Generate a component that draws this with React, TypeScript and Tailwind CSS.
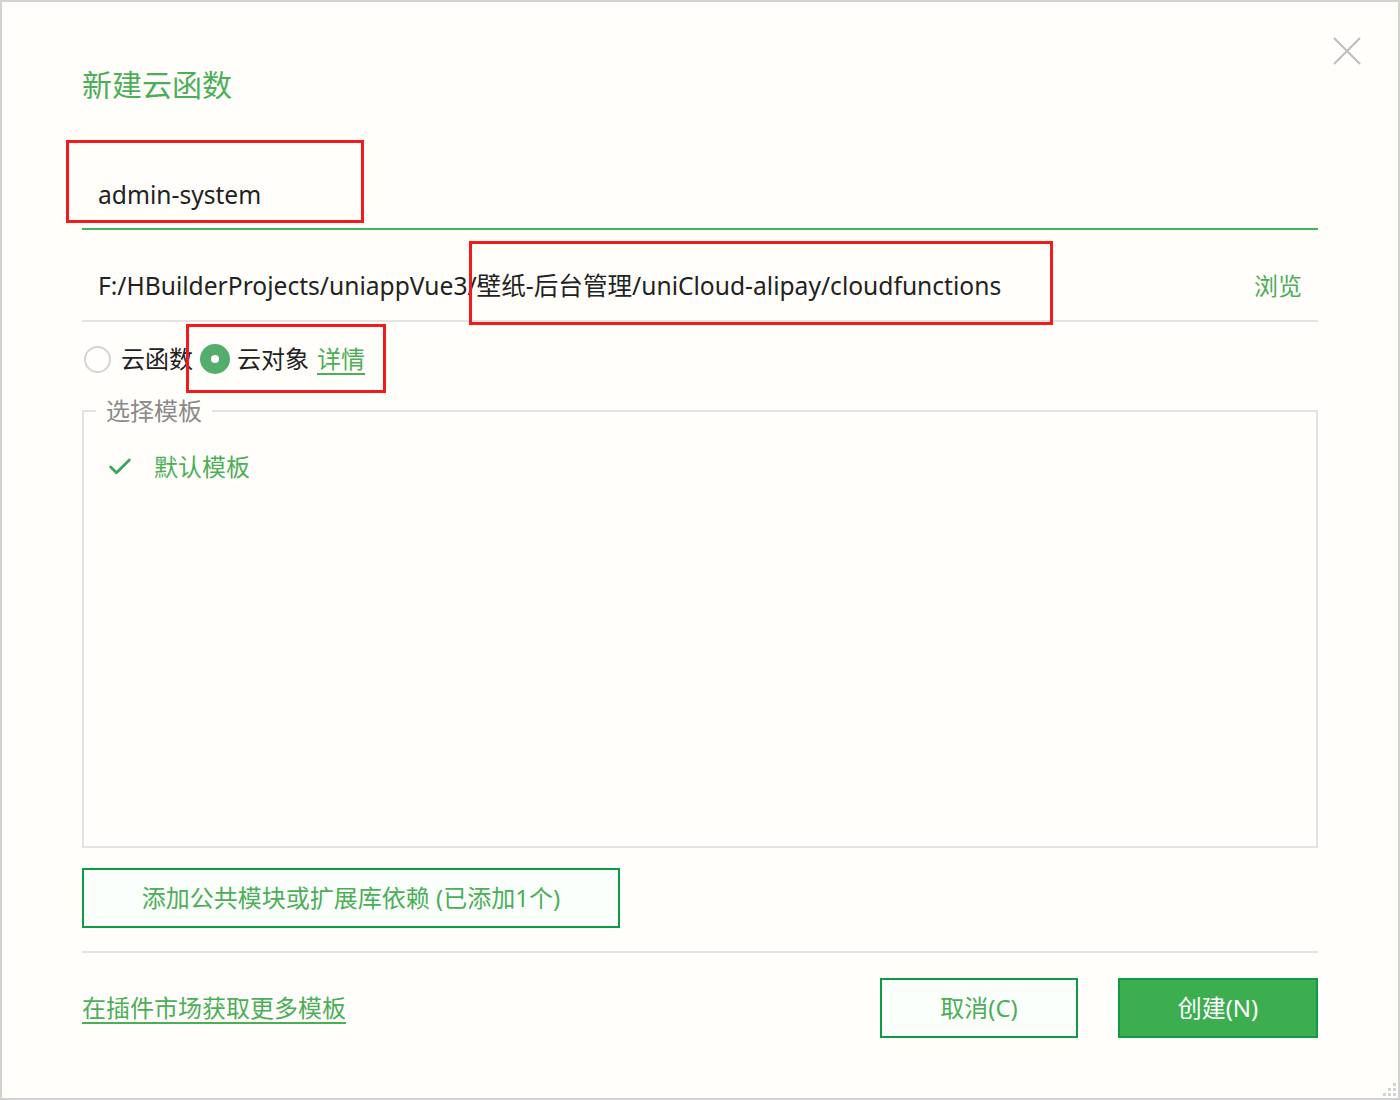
import { Check } from 'lucide-react'

const font = { fontFamily: '"Noto Sans", "Noto Sans CJK SC", sans-serif' }

// ─── Red annotation box (drawn over content) ──────────────────────────────────

function Mark({ className }: { className: string }) {
  return <div className={`pointer-events-none absolute border-[3px] border-[#f21b1b] ${className}`} />
}

// ─── Dialog ───────────────────────────────────────────────────────────────────

export default function App() {
  return (
    <div
      className="relative h-[1100px] w-[1400px] overflow-hidden border-2 border-[#d2d2d2] bg-[#fffefb] text-[#222]"
      style={font}
    >
      <button className="absolute left-[1330px] top-[34px] text-[#bdbdbd]">
        <svg width="30" height="30" viewBox="0 0 30 30" fill="none" stroke="currentColor" strokeWidth="2">
          <path d="M2 2 L28 28 M28 2 L2 28" />
        </svg>
      </button>

      <div className="flex flex-col px-[80px] pt-[62px]">
        {/* Title */}
        <h1 className="text-[30px] leading-[42px] text-[#4dae58]">新建云函数</h1>

        {/* Name input */}
        <div className="mt-[72px] border-b-2 border-[#41b55a] pb-[16px] pl-[16px] text-[24.6px] leading-[34px]">
          admin-system
        </div>

        {/* Path */}
        <div className="flex items-center justify-between border-b-2 border-[#e3e3e3] pb-[17px] pl-[16px] pr-[16px] pt-[39px] text-[24.6px] leading-[34px]">
          <span>F:/HBuilderProjects/uniappVue3/壁纸-后台管理/uniCloud-alipay/cloudfunctions</span>
          <span className="text-[24px] text-[#4dae58]">浏览</span>
        </div>

        {/* Type radios */}
        <div className="mt-[20px] flex items-center text-[24px] leading-[34px]">
          <span className="ml-[2px] h-[27px] w-[27px] rounded-full border-2 border-[#d4d4d4]" />
          <span className="ml-[10px]">云函数</span>
          <span className="ml-[7px] flex h-[30px] w-[30px] items-center justify-center rounded-full bg-[#53ad6b]">
            <span className="h-[8px] w-[8px] rounded-full bg-white" />
          </span>
          <span className="ml-[7px]">云对象</span>
          <span className="ml-[8px] text-[#4dae58] underline underline-offset-[5px]">详情</span>
        </div>

        {/* Template list */}
        <fieldset className="mt-[20px] h-[452px] border-2 border-[#e3e3e3] px-[22px] pt-[25px]">
          <legend className="-ml-[10px] px-[10px] text-[24px] leading-[30px] text-[#8a8a8a]">选择模板</legend>
          <div className="flex items-center text-[24px] leading-[32px] text-[#4dae58]">
            <Check size={28} strokeWidth={2.4} className="text-[#3aa55c]" />
            <span className="ml-[20px]">默认模板</span>
          </div>
        </fieldset>

        {/* Dependencies */}
        <button className="mt-[20px] h-[60px] w-[538px] border-2 border-[#0f9a48] bg-[#fafffb] text-[24px] text-[#4dae58]">
          添加公共模块或扩展库依赖 (已添加1个)
        </button>

        <div className="mt-[23px] h-[2px] bg-[#e3e3e3]" />

        {/* Footer */}
        <div className="mt-[25px] flex items-center">
          <span className="text-[24px] text-[#4dae58] underline underline-offset-[5px]">在插件市场获取更多模板</span>
          <button className="ml-auto h-[60px] w-[198px] border-2 border-[#0f9a48] bg-[#fafffb] text-[24px] text-[#4dae58]">
            取消(C)
          </button>
          <button className="ml-[40px] h-[60px] w-[200px] border-2 border-[#0f9a48] bg-[#3cae50] text-[24px] text-white">
            创建(N)
          </button>
        </div>
      </div>

      {/* Resize grip */}
      <div className="absolute bottom-[2px] right-[2px] grid grid-cols-3 gap-[2px]">
        {[0, 0, 1, 0, 1, 1, 1, 1, 1].map((v, i) => (
          <span key={i} className={`h-[3px] w-[3px] ${v ? 'bg-[#d4d4d4]' : ''}`} />
        ))}
      </div>

      <Mark className="left-[64px] top-[138px] h-[83px] w-[298px]" />
      <Mark className="left-[467px] top-[239px] h-[84px] w-[584px]" />
      <Mark className="left-[184px] top-[322px] h-[69px] w-[200px]" />
    </div>
  )
}
